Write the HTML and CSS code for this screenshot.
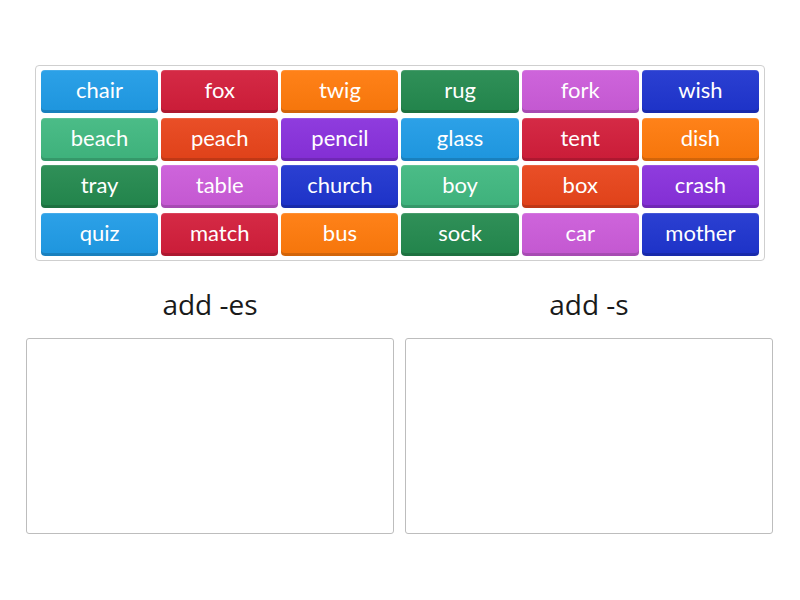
FILE: index.html
```html
<!DOCTYPE html>
<html>
<head>
<meta charset="utf-8">
<link rel="stylesheet" href="styles.css">
</head>
<body>
<div class="page">
  <div class="bank">
    <div class="tile c-blue">chair</div>
    <div class="tile c-red">fox</div>
    <div class="tile c-orange">twig</div>
    <div class="tile c-dgreen">rug</div>
    <div class="tile c-pink">fork</div>
    <div class="tile c-dblue">wish</div>
    <div class="tile c-lgreen">beach</div>
    <div class="tile c-ored">peach</div>
    <div class="tile c-purple">pencil</div>
    <div class="tile c-blue">glass</div>
    <div class="tile c-red">tent</div>
    <div class="tile c-orange">dish</div>
    <div class="tile c-dgreen">tray</div>
    <div class="tile c-pink">table</div>
    <div class="tile c-dblue">church</div>
    <div class="tile c-lgreen">boy</div>
    <div class="tile c-ored">box</div>
    <div class="tile c-purple">crash</div>
    <div class="tile c-blue">quiz</div>
    <div class="tile c-red">match</div>
    <div class="tile c-orange">bus</div>
    <div class="tile c-dgreen">sock</div>
    <div class="tile c-pink">car</div>
    <div class="tile c-dblue">mother</div>
  </div>
  <div class="groups">
    <div class="group">
      <div class="group-title">add -es</div>
      <div class="drop"></div>
    </div>
    <div class="group">
      <div class="group-title">add -s</div>
      <div class="drop"></div>
    </div>
  </div>
</div>
</body>
</html>
```
FILE: styles.css
```css
html, body {
  margin: 0;
  padding: 0;
  background: #ffffff;
}
body {
  font-family: "Lato", "Open Sans", sans-serif;
  width: 800px;
  height: 600px;
  overflow: hidden;
}
.page {
  padding-top: 65px;
}
.bank {
  margin-left: 35px;
  width: 730px;
  box-sizing: border-box;
  border: 1px solid #cfcfcf;
  border-radius: 4px;
  padding: 4px 5px;
  display: grid;
  grid-template-columns: repeat(6, 1fr);
  column-gap: 3px;
  row-gap: 4.5px;
}
.tile {
  height: 43px;
  box-sizing: border-box;
  padding-bottom: 3px;
  line-height: 40px;
  text-align: center;
  color: #ffffff;
  font-size: 22px;
  border-radius: 4px;
  box-shadow: inset 0 -3px 0 rgba(0, 0, 0, 0.14), inset 0 1px 0 rgba(255, 255, 255, 0.12);
  background-image: linear-gradient(to bottom, rgba(255,255,255,0.06), rgba(0,0,0,0.04));
}
.c-blue { background-color: #1f9be6; }
.c-red { background-color: #d21d3a; }
.c-orange { background-color: #ff7a0b; }
.c-dgreen { background-color: #23894e; }
.c-pink { background-color: #cb5bd9; }
.c-dblue { background-color: #1e34cf; }
.c-lgreen { background-color: #40b880; }
.c-ored { background-color: #e8441a; }
.c-purple { background-color: #8830dc; }

.groups {
  display: flex;
  gap: 11px;
  padding-left: 26px;
  margin-top: 27px;
}
.group {
  width: 368px;
}
.group-title {
  text-align: center;
  font-family: "Open Sans", "Lato", sans-serif;
  font-size: 28px;
  line-height: 32px;
  color: #1a1a1a;
  margin-bottom: 18px;
}
.drop {
  height: 196px;
  box-sizing: border-box;
  border: 1px solid #bdbdbd;
  border-radius: 3px;
}
```
